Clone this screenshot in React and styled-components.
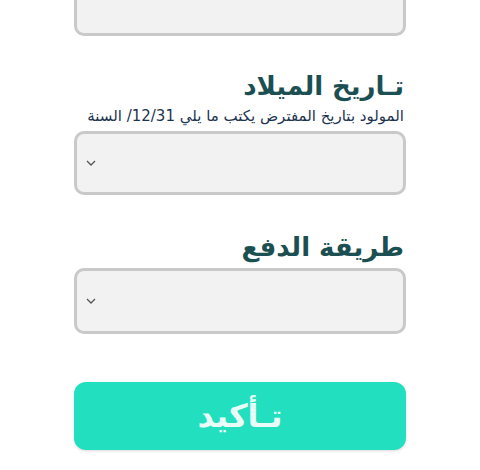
import styled, { createGlobalStyle } from 'styled-components';

const GlobalStyle = createGlobalStyle`
  body {
    margin: 0;
    background: #ffffff;
    font-family: 'DejaVu Sans', 'Noto Sans', sans-serif;
  }
`;

const Page = styled.div`
  width: 480px;
  height: 470px;
  overflow: hidden;
  background: #fff;
`;

const Form = styled.form`
  direction: rtl;
  width: 332px;
  margin: -30px 0 0 74px;
  display: flex;
  flex-direction: column;
`;

const Field = styled.div`
  display: flex;
  flex-direction: column;
  margin-top: ${(p) => p.$gap || 0}px;
`;

const Label = styled.label`
  font-size: 26px;
  font-weight: 600;
  color: #1c4f52;
  line-height: 34px;
  margin-right: 2px;
`;

const Hint = styled.div`
  font-size: 15px;
  color: #1c3350;
  line-height: 22px;
  margin: 2px 2px 4px 0;
`;

const Box = styled.div`
  box-sizing: border-box;
  height: ${(p) => p.$h || 64}px;
  border: 3px solid #c9c9c9;
  border-radius: 10px;
  background: #f2f2f2;
  display: flex;
  align-items: center;
  padding-left: 8px;
  direction: ltr;
  margin-top: ${(p) => p.$top || 0}px;
`;

const Chevron = () => (
  <svg width="12" height="8" viewBox="0 0 12 8">
    <path d="M2 2l4 4 4-4" fill="none" stroke="#555" strokeWidth="1.3" />
  </svg>
);

const Button = styled.button`
  margin-top: 48px;
  height: 68px;
  border: none;
  border-radius: 12px;
  background: #22dfbf;
  color: #eafcf7;
  font-family: 'DejaVu Sans', sans-serif;
  font-size: 32px;
  font-weight: 600;
  box-shadow: 0 1px 3px rgba(0, 0, 0, 0.15);
`;

export default function App() {
  return (
    <Page>
      <GlobalStyle />
      <Form>
        <Box $h={66} />
        <Field $gap={33}>
          <Label>تـاريخ الميلاد</Label>
          <Hint>المولود بتاريخ المفترض يكتب ما يلي 12/31/ السنة</Hint>
          <Box $h={64}>
            <Chevron />
          </Box>
        </Field>
        <Field $gap={35}>
          <Label>طريقة الدفع</Label>
          <Box $top={4} $h={66}>
            <Chevron />
          </Box>
        </Field>
        <Button type="button">تـأكيد</Button>
      </Form>
    </Page>
  );
}
